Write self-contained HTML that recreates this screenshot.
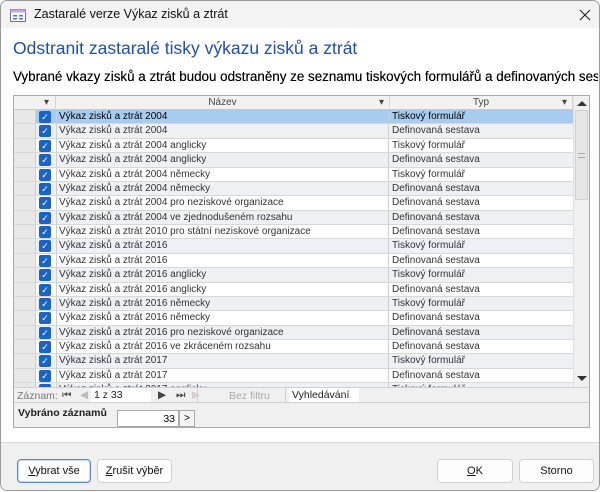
<!DOCTYPE html>
<html><head><meta charset="utf-8"><style>
*{box-sizing:border-box;margin:0;padding:0}
body{width:601px;height:492px;background:#fff;font-family:"Liberation Sans","DejaVu Sans",sans-serif;position:relative;overflow:hidden}
.win{position:absolute;left:0;top:0;width:600px;height:491px;border:1px solid #9a9a9a;border-radius:7px;background:#fff;overflow:hidden}
.title{position:absolute;left:0;top:0;width:100%;height:27px;background:#f3f3f3;font-size:12.5px;color:#111}
.title span{position:absolute;left:33px;top:6px}
.close{position:absolute;left:574px;top:3px;font-size:17px;color:#222;font-weight:100}
h1{position:absolute;left:12px;top:37px;font-size:17.5px;font-weight:normal;color:#1f4fa8;white-space:nowrap}
.sub{position:absolute;left:12px;top:68px;font-size:13.4px;color:#000;white-space:nowrap;width:585px;overflow:hidden;font-weight:normal;text-shadow:0 0 0.3px #000}
.grid{position:absolute;left:12px;top:94px;width:577px;height:333px;border:1px solid #a9a9a9;background:#f0f0f0;overflow:hidden}
.hdr{position:absolute;top:0;height:14px;background:#f2f2f2;border-bottom:1px solid #c8c8c8;border-right:1px solid #d4d4d4;font-size:10px;color:#444;text-align:center;line-height:13px}
.rows{position:absolute;left:0;top:14px;width:559px;height:278px;overflow:hidden;background:#fff}
.r{position:relative;height:14.38px;font-size:10px;color:#333;border-bottom:1px solid #d8d8d8;line-height:13px}
.r.g{background:#eef0f4}
.r.s{background:#a6cdf0;color:#000}
.r .sel{position:absolute;left:0;top:0;width:22px;height:100%;background:#e8e8e8;border-right:1px solid #cfcfcf}
.r .cb{position:absolute;left:25px;top:1px;width:12px;height:12px;background:#1a64c8;border-radius:2px;color:#fff;font-size:9px;line-height:12px;text-align:center}
.r .n{position:absolute;left:42px;top:0;width:333px;height:100%;border-left:1px solid #cfcfcf;border-right:1px solid #cfcfcf;padding-left:2px;white-space:nowrap}
.r .t{position:absolute;left:376px;top:0;padding-left:2px;white-space:nowrap}
.sb{position:absolute;left:559px;top:0;width:16px;height:292px;background:#f0f0f0;border-left:1px solid #e0e0e0}
.nav{position:absolute;left:0;top:291px;width:575px;height:16px;background:#f0f0f0;border-top:1px solid #d0d0d0;border-bottom:1px solid #d0d0d0;font-size:10.5px;color:#777}
.btn{position:absolute;top:458px;height:24px;border:1px solid #d0d0d0;border-radius:4px;background:#fdfdfd;font-size:11px;color:#111;text-align:center;line-height:22px}
.footer{position:absolute;left:0;top:441px;width:100%;height:52px;background:#f0f0f0;border-top:1px solid #d8d8d8}
</style></head><body>
<div class="win">
<div class="title"><svg style="position:absolute;left:9px;top:8px" width="16" height="13"><rect x="0.5" y="0.5" width="15" height="12" fill="#fff" stroke="#7a6a9a"/><rect x="0.5" y="0.5" width="15" height="3" fill="#c8a8d8"/><rect x="3" y="6" width="4" height="1.5" fill="#4a7ac8"/><rect x="9" y="6" width="4" height="1.5" fill="#4a7ac8"/><rect x="3" y="9" width="4" height="1.5" fill="#4a7ac8"/><rect x="9" y="9" width="4" height="1.5" fill="#4a7ac8"/></svg><span>Zastaralé verze Výkaz zisků a ztrát</span><svg class="close" width="12" height="12" style="top:8px;left:578px"><path d="M1 1L11 11M11 1L1 11" stroke="#222" stroke-width="1.1"/></svg></div>
<h1>Odstranit zastaralé tisky výkazu zisků a ztrát</h1>
<div class="sub">Vybrané vkazy zisků a ztrát budou odstraněny ze seznamu tiskových formulářů a definovaných sestav</div>
<div class="grid">
<div class="hdr" style="left:0;width:42px;text-align:right;padding-right:6px">▾</div>
<div class="hdr" style="left:42px;width:334px">Název<span style="position:absolute;right:5px">▾</span></div>
<div class="hdr" style="left:376px;width:183px">Typ<span style="position:absolute;right:5px">▾</span></div>
<div class="rows">
<div class="r s"><div class="sel"></div><div class="cb">✓</div><div class="n">Výkaz zisků a ztrát 2004</div><div class="t">Tiskový formulář</div></div>
<div class="r g"><div class="sel"></div><div class="cb">✓</div><div class="n">Výkaz zisků a ztrát 2004</div><div class="t">Definovaná sestava</div></div>
<div class="r"><div class="sel"></div><div class="cb">✓</div><div class="n">Výkaz zisků a ztrát 2004 anglicky</div><div class="t">Tiskový formulář</div></div>
<div class="r g"><div class="sel"></div><div class="cb">✓</div><div class="n">Výkaz zisků a ztrát 2004 anglicky</div><div class="t">Definovaná sestava</div></div>
<div class="r"><div class="sel"></div><div class="cb">✓</div><div class="n">Výkaz zisků a ztrát 2004 německy</div><div class="t">Tiskový formulář</div></div>
<div class="r g"><div class="sel"></div><div class="cb">✓</div><div class="n">Výkaz zisků a ztrát 2004 německy</div><div class="t">Definovaná sestava</div></div>
<div class="r"><div class="sel"></div><div class="cb">✓</div><div class="n">Výkaz zisků a ztrát 2004 pro neziskové organizace</div><div class="t">Definovaná sestava</div></div>
<div class="r g"><div class="sel"></div><div class="cb">✓</div><div class="n">Výkaz zisků a ztrát 2004 ve zjednodušeném rozsahu</div><div class="t">Definovaná sestava</div></div>
<div class="r"><div class="sel"></div><div class="cb">✓</div><div class="n">Výkaz zisků a ztrát 2010 pro státní neziskové organizace</div><div class="t">Definovaná sestava</div></div>
<div class="r g"><div class="sel"></div><div class="cb">✓</div><div class="n">Výkaz zisků a ztrát 2016</div><div class="t">Tiskový formulář</div></div>
<div class="r"><div class="sel"></div><div class="cb">✓</div><div class="n">Výkaz zisků a ztrát 2016</div><div class="t">Definovaná sestava</div></div>
<div class="r g"><div class="sel"></div><div class="cb">✓</div><div class="n">Výkaz zisků a ztrát 2016 anglicky</div><div class="t">Tiskový formulář</div></div>
<div class="r"><div class="sel"></div><div class="cb">✓</div><div class="n">Výkaz zisků a ztrát 2016 anglicky</div><div class="t">Definovaná sestava</div></div>
<div class="r g"><div class="sel"></div><div class="cb">✓</div><div class="n">Výkaz zisků a ztrát 2016 německy</div><div class="t">Tiskový formulář</div></div>
<div class="r"><div class="sel"></div><div class="cb">✓</div><div class="n">Výkaz zisků a ztrát 2016 německy</div><div class="t">Definovaná sestava</div></div>
<div class="r g"><div class="sel"></div><div class="cb">✓</div><div class="n">Výkaz zisků a ztrát 2016 pro neziskové organizace</div><div class="t">Definovaná sestava</div></div>
<div class="r"><div class="sel"></div><div class="cb">✓</div><div class="n">Výkaz zisků a ztrát 2016 ve zkráceném rozsahu</div><div class="t">Definovaná sestava</div></div>
<div class="r g"><div class="sel"></div><div class="cb">✓</div><div class="n">Výkaz zisků a ztrát 2017</div><div class="t">Tiskový formulář</div></div>
<div class="r"><div class="sel"></div><div class="cb">✓</div><div class="n">Výkaz zisků a ztrát 2017</div><div class="t">Definovaná sestava</div></div>
<div class="r g"><div class="sel"></div><div class="cb">✓</div><div class="n">Výkaz zisků a ztrát 2017 anglicky</div><div class="t">Tiskový formulář</div></div>
</div>
<div class="sb">
<div style="position:absolute;left:3px;top:5px;width:0;height:0;border-left:5px solid transparent;border-right:5px solid transparent;border-bottom:5px solid #333"></div>
<div style="position:absolute;left:1px;top:14px;width:13px;height:90px;background:#e6e6e6;border:1px solid #d0d0d0"></div>
<div style="position:absolute;left:4px;top:57px;width:7px;height:5px;border-top:1px solid #aaa;border-bottom:1px solid #aaa"></div>
<div style="position:absolute;left:3px;top:280px;width:0;height:0;border-left:5px solid transparent;border-right:5px solid transparent;border-top:5px solid #333"></div>
</div>
<div class="nav">
<span style="position:absolute;left:3px;top:2px">Záznam:</span>
<span style="position:absolute;left:48px;top:1px;color:#555">⏮</span>
<span style="position:absolute;left:66px;top:1px;color:#bbb">◀</span>
<div style="position:absolute;left:77px;top:0;width:60px;height:14px;background:#fff;color:#222;padding:1px 3px">1 z 33</div>
<span style="position:absolute;left:144px;top:1px;color:#444">▶</span>
<span style="position:absolute;left:162px;top:1px;color:#444">⏭</span>
<span style="position:absolute;left:178px;top:1px;color:#dcc">▶</span>
<div style="position:absolute;left:183px;top:0;height:15px;border-left:1px solid #d0d0d0"></div>
<span style="position:absolute;left:215px;top:2px;color:#aaa">Bez filtru</span>
<div style="position:absolute;left:271px;top:0;height:15px;border-left:1px solid #d0d0d0"></div>
<div style="position:absolute;left:275px;top:0;width:70px;height:14px;background:#fff;color:#222;padding:1px 3px">Vyhledávání</div>
</div>
<div style="position:absolute;left:4px;top:311px;font-size:10.5px;font-weight:bold;color:#222">Vybráno záznamů</div>
<div style="position:absolute;left:103px;top:314px;width:62px;height:17px;background:#fff;border:1px solid #aaa;font-size:10.5px;text-align:right;padding:2px 3px">33</div>
<div style="position:absolute;left:165px;top:314px;width:16px;height:17px;background:#f4f4f4;border:1px solid #aaa;font-size:10px;text-align:center;line-height:15px">&gt;</div>
</div>
<div class="footer"></div>
<div class="btn" style="left:16px;width:74px;border:1px solid #5a8acb;box-shadow:inset 0 0 0 1px #c8daf0"><u>V</u>ybrat vše</div>
<div class="btn" style="left:96px;width:75px"><u>Z</u>rušit výběr</div>
<div class="btn" style="left:436px;width:76px"><u>O</u>K</div>
<div class="btn" style="left:518px;width:75px">Storno</div>
</div>
</body></html>
